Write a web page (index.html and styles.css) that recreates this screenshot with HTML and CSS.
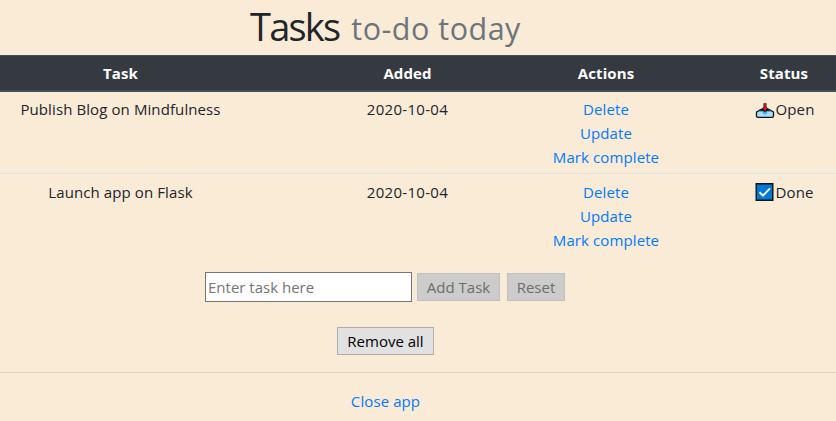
FILE: index.html
```html
<!DOCTYPE html>
<html lang="en">
<head>
<meta charset="utf-8">
<title>Tasks</title>
<link rel="stylesheet" href="styles.css">
</head>
<body>
<h1><span class="title">Tasks</span><small>to-do today</small></h1>
<table>
<thead>
<tr><th class="task">Task</th><th class="added">Added</th><th class="actions">Actions</th><th class="status">Status</th></tr>
</thead>
<tbody>
<tr>
<td class="task">Publish Blog on Mindfulness</td>
<td class="date">2020-10-04</td>
<td><a href="#">Delete</a><a href="#">Update</a><a href="#">Mark complete</a></td>
<td class="status"><div class="state"><svg width="20" height="20" viewBox="0 0 20 20"><path d="M5 11h10l3.500 2v4q0 1.300-1.500 1.300H3q-1.500 0-1.500-1.300v-4z" fill="#a9dcfb" stroke="#111" stroke-width="1.300" stroke-linejoin="round"/><path d="M4.500 11.700h11L16 13h-3.500Q12 15.500 10 15.500T7.500 13H4z" fill="#4aa6ea"/><path d="M4.500 11L8.500 8.300v-4h3v4l4 2.700-3 .7L10 13l-2.500-1.300z" fill="#111"/><path d="M9.200 4.500h1.600v4.500h1.700L10 12 7.500 9h1.700z" fill="#f0101a"/></svg><span>Open</span></div></td>
</tr>
<tr>
<td class="task">Launch app on Flask</td>
<td class="date">2020-10-04</td>
<td><a href="#">Delete</a><a href="#">Update</a><a href="#">Mark complete</a></td>
<td class="status"><div class="state"><svg width="20" height="18" viewBox="0 0 20 18"><path d="M1.200.700h16.600v16.600H1.200z" fill="#0078d7" stroke="#111" stroke-width="1.400"/><path d="M4.500 9.300l3.500 3.400L15 5.300" fill="none" stroke="#fff" stroke-width="1.900"/></svg><span>Done</span></div></td>
</tr>
</tbody>
</table>
<form class="add"><input type="text" placeholder="Enter task here"><button type="button" class="btn-add" disabled>Add Task</button><button type="button" class="btn-reset" disabled>Reset</button></form>
<div class="remove"><button type="button">Remove all</button></div>
<hr>
<div class="close"><a href="#">Close app</a></div>
</body>
</html>
```
FILE: styles.css
```css
* { box-sizing: border-box; }
body {
  margin: 0;
  width: 836px;
  height: 421px;
  overflow: hidden;
  background: #faebd7;
  color: #212529;
  font: 15px/24px "Segoe UI", "Open Sans", sans-serif;
  letter-spacing: .1px;
}
a { color: #007bff; text-decoration: none; }
h1 {
  display: flex;
  align-items: baseline;
  justify-content: center;
  gap: 12px;
  width: 771px;
  height: 55px;
  margin: 0;
  padding-top: 2px;
  font-size: 38px;
  font-weight: 400;
  line-height: 48px;
  letter-spacing: -1.8px;
  white-space: nowrap;
}
h1 small { font-size: 30.5px; letter-spacing: .5px; color: #6c757d; transform: translateY(-1px); }
table { width: 836px; table-layout: fixed; border-collapse: separate; border-spacing: 0; text-align: center; }
th {
  height: 37px;
  padding: 0;
  background: #343a40;
  border-top: 1px solid #454d55;
  border-bottom: 2px solid #454d55;
  color: #fff;
  font-weight: 700;
}
.task { width: 290px; padding-right: 49px; }
.added { width: 235px; }
.actions { width: 162px; }
.status { padding-left: 45px; }
.date { letter-spacing: .3px; }
td { height: 81px; padding: 5px 0 0; vertical-align: top; }
td.task { padding-right: 49px; }
td.status { padding-left: 46px; }
tbody tr + tr td { height: 83px; padding-top: 6px; border-top: 1px solid #dee2e6; }
tbody tr + tr td.status { padding-left: 45px; }
td a { display: block; }
.state { display: flex; align-items: center; justify-content: center; gap: 1px; height: 24px; }
svg { flex: none; }
input {
  width: 207px;
  height: 30px;
  margin: 0 5px 0 0;
  padding: 1px 2px;
  border: 1px solid #767676;
  border-radius: 0;
  background: #fff;
  font: inherit;
}
input::placeholder { color: #757575; opacity: 1; }
button {
  height: 28px;
  padding: 0;
  border: 1px solid #adadad;
  border-radius: 0;
  background: #e1e1e1;
  color: #000;
  font: inherit;
  white-space: nowrap;
}
button:disabled { background: #ccc; border-color: #bfbfbf; color: #6d6d6d; }
.add { display: flex; align-items: center; justify-content: center; width: 770px; margin: 16px 0 25px; height: 30px; }
.btn-add { width: 83px; margin-right: 7px; }
.btn-reset { width: 58px; }
.remove { display: flex; justify-content: center; width: 771px; }
.remove button { width: 97px; }
hr { margin: 17px 0 16px; border: 0; border-top: 1px solid rgba(0, 0, 0, .1); }
.close { width: 771px; text-align: center; }
```
